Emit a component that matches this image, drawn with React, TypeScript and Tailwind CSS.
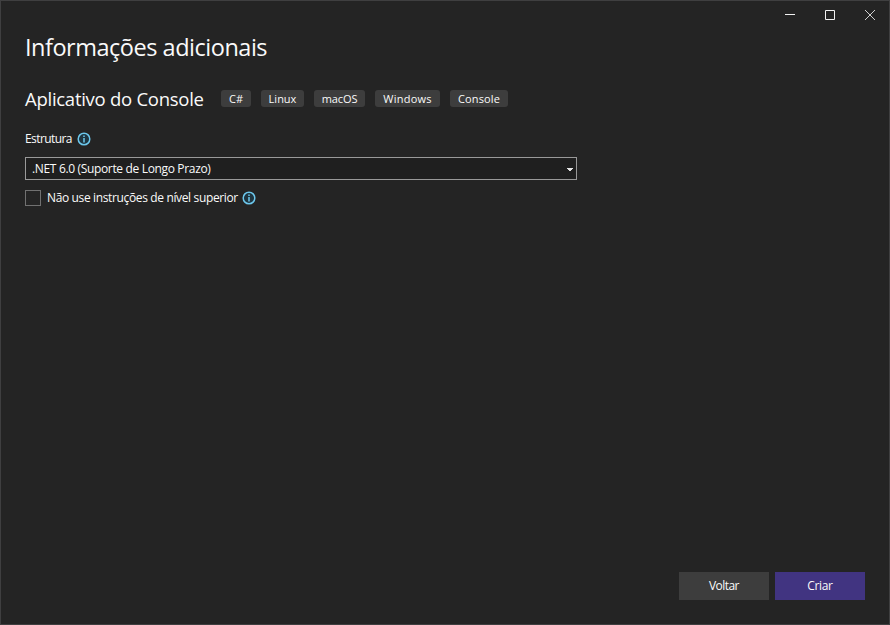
const font = 'font-["Open_Sans","Noto_Sans",sans-serif]';

const tags = [
  { label: "C#", size: "w-[30px]", spacing: "tracking-[0px]" },
  { label: "Linux", size: "w-[43px]", spacing: "tracking-[0px]" },
  { label: "macOS", size: "w-[51px]", spacing: "tracking-[-0.1px]" },
  { label: "Windows", size: "w-[65px]", spacing: "tracking-[0.25px]" },
  { label: "Console", size: "w-[58px]", spacing: "tracking-[0.15px]" },
];

function InfoIcon() {
  return (
    <svg width="14" height="14" viewBox="0 0 14 14" className="shrink-0" fill="none">
      <circle cx="7" cy="7" r="5.8" fill="#1f3540" stroke="#6cc7ec" strokeWidth="1.5" />
      <path d="M7 6v4.4M7 3.5v1.4" stroke="#6cc7ec" strokeWidth="1.5" />
    </svg>
  );
}

function WindowControls() {
  return (
    <div className="-mr-px flex h-[27px] shrink-0 justify-end">
      <button className="flex w-10 items-center justify-center" aria-label="Minimizar">
        <svg width="10" height="10" viewBox="0 0 10 10"><path d="M0 4.5h10" stroke="#f1f1f1" /></svg>
      </button>
      <button className="flex w-10 items-center justify-center" aria-label="Maximizar">
        <svg width="10" height="10" viewBox="0 0 10 10"><path d="M.5.5h9v9h-9z" fill="none" stroke="#f1f1f1" /></svg>
      </button>
      <button className="flex w-10 items-center justify-center" aria-label="Fechar">
        <svg width="10" height="10" viewBox="0 0 10 10"><path d="M0 0l10 10M10 0L0 10" stroke="#d0d0d0" strokeWidth="1" /></svg>
      </button>
    </div>
  );
}

export default function App() {
  return (
    <div className={`flex h-[625px] w-[890px] flex-col border border-[#3f3f40] bg-[#242424] text-[#fafafa] ${font}`}>
      <WindowControls />
      <main className="flex flex-1 flex-col items-start px-6 pt-px">
        <h1 className="h-9 whitespace-nowrap text-[23.5px] leading-9 tracking-[-0.48px]">Informações adicionais</h1>
        <div className="mt-[19px] flex h-7 items-center">
          <h2 className="w-[196px] whitespace-nowrap pt-0.5 text-[18.5px] leading-7 tracking-[-0.27px]">Aplicativo do Console</h2>
          <div className="flex gap-2.5">
            {tags.map((t) => (
              <span key={t.label} className={`flex h-[17px] items-center justify-center rounded-[3px] bg-[#3d3d3d] text-[11px] leading-[17px] ${t.size} ${t.spacing}`}>
                {t.label}
              </span>
            ))}
          </div>
        </div>
        <div className="mt-[19px] flex h-4 items-center gap-[5px]">
          <span className="w-[47px] whitespace-nowrap text-xs leading-4 tracking-[-0.58px]">Estrutura</span>
          <InfoIcon />
        </div>
        <div className="mt-2.5 flex h-[23px] w-[552px] items-center justify-between border border-[#999999] bg-[#1f1f1f] pr-[3px] pl-1.5">
          <span className="whitespace-nowrap text-xs tracking-[-0.34px]">.NET 6.0 (Suporte de Longo Prazo)</span>
          <svg width="6" height="3" viewBox="0 0 6 3" className="mt-0.5"><path d="M0 0h6v1H5v1H4v1H2V2H1V1H0z" fill="#e4e4e4" /></svg>
        </div>
        <div className="mt-2.5 flex h-4 items-center">
          <span className="size-4 border border-[#717171] bg-[#252525]" />
          <span className="ml-1.5 w-[195px] whitespace-nowrap text-xs leading-4 tracking-[-0.36px]">Não use instruções de nível superior</span>
          <InfoIcon />
        </div>
      </main>
      <footer className="flex shrink-0 justify-end gap-1.5 pr-6 pb-6 text-xs">
        <button className="h-7 w-[90px] bg-[#3d3d3d] tracking-[-0.55px]">Voltar</button>
        <button className="h-7 w-[90px] bg-[#413481] tracking-[-0.35px]">Criar</button>
      </footer>
    </div>
  );
}
